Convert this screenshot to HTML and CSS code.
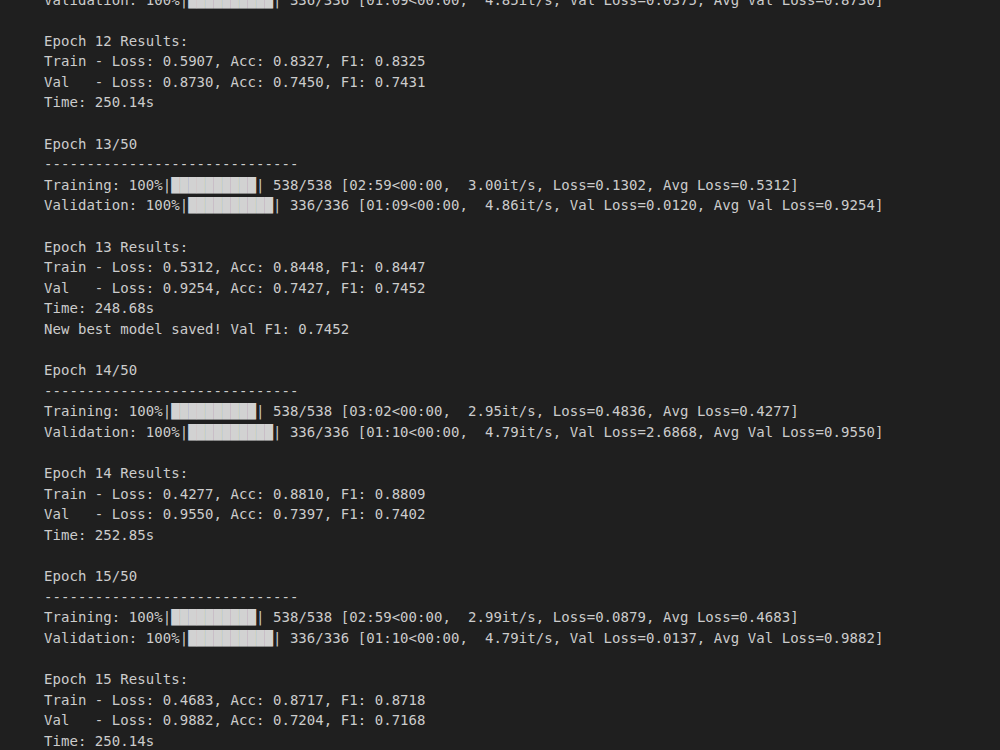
FILE: index.html
```html
<!DOCTYPE html>
<html lang="en">
<head>
<meta charset="utf-8">
<title>Training output</title>
<link rel="stylesheet" href="styles.css">
</head>
<body>
<main class="output">
<pre class="log">Validation: 100%|<span class="bar">██████████</span>| 336/336 [01:09&lt;00:00,  4.85it/s, Val Loss=0.0375, Avg Val Loss=0.8730]

Epoch 12 Results:
Train - Loss: 0.5907, Acc: 0.8327, F1: 0.8325
Val   - Loss: 0.8730, Acc: 0.7450, F1: 0.7431
Time: 250.14s

Epoch 13/50
------------------------------
Training: 100%|<span class="bar">██████████</span>| 538/538 [02:59&lt;00:00,  3.00it/s, Loss=0.1302, Avg Loss=0.5312]
Validation: 100%|<span class="bar">██████████</span>| 336/336 [01:09&lt;00:00,  4.86it/s, Val Loss=0.0120, Avg Val Loss=0.9254]

Epoch 13 Results:
Train - Loss: 0.5312, Acc: 0.8448, F1: 0.8447
Val   - Loss: 0.9254, Acc: 0.7427, F1: 0.7452
Time: 248.68s
New best model saved! Val F1: 0.7452

Epoch 14/50
------------------------------
Training: 100%|<span class="bar">██████████</span>| 538/538 [03:02&lt;00:00,  2.95it/s, Loss=0.4836, Avg Loss=0.4277]
Validation: 100%|<span class="bar">██████████</span>| 336/336 [01:10&lt;00:00,  4.79it/s, Val Loss=2.6868, Avg Val Loss=0.9550]

Epoch 14 Results:
Train - Loss: 0.4277, Acc: 0.8810, F1: 0.8809
Val   - Loss: 0.9550, Acc: 0.7397, F1: 0.7402
Time: 252.85s

Epoch 15/50
------------------------------
Training: 100%|<span class="bar">██████████</span>| 538/538 [02:59&lt;00:00,  2.99it/s, Loss=0.0879, Avg Loss=0.4683]
Validation: 100%|<span class="bar">██████████</span>| 336/336 [01:10&lt;00:00,  4.79it/s, Val Loss=0.0137, Avg Val Loss=0.9882]

Epoch 15 Results:
Train - Loss: 0.4683, Acc: 0.8717, F1: 0.8718
Val   - Loss: 0.9882, Acc: 0.7204, F1: 0.7168
Time: 250.14s
</pre>
</main>
</body>
</html>
```

FILE: styles.css
```css
html, body {
  margin: 0;
  padding: 0;
  background: #1f1f1f;
  height: 100%;
  overflow: hidden;
}

.output {
  padding-left: 44px;
}

.log {
  margin: -10.5px 0 0 0;
  font-family: "DejaVu Sans Mono", "Liberation Mono", monospace;
  font-size: 14px;
  letter-spacing: 0.05px;
  line-height: 20.59px;
  color: #cccccc;
  white-space: pre;
}

.bar {
  color: #d2d2d2;
}
```
